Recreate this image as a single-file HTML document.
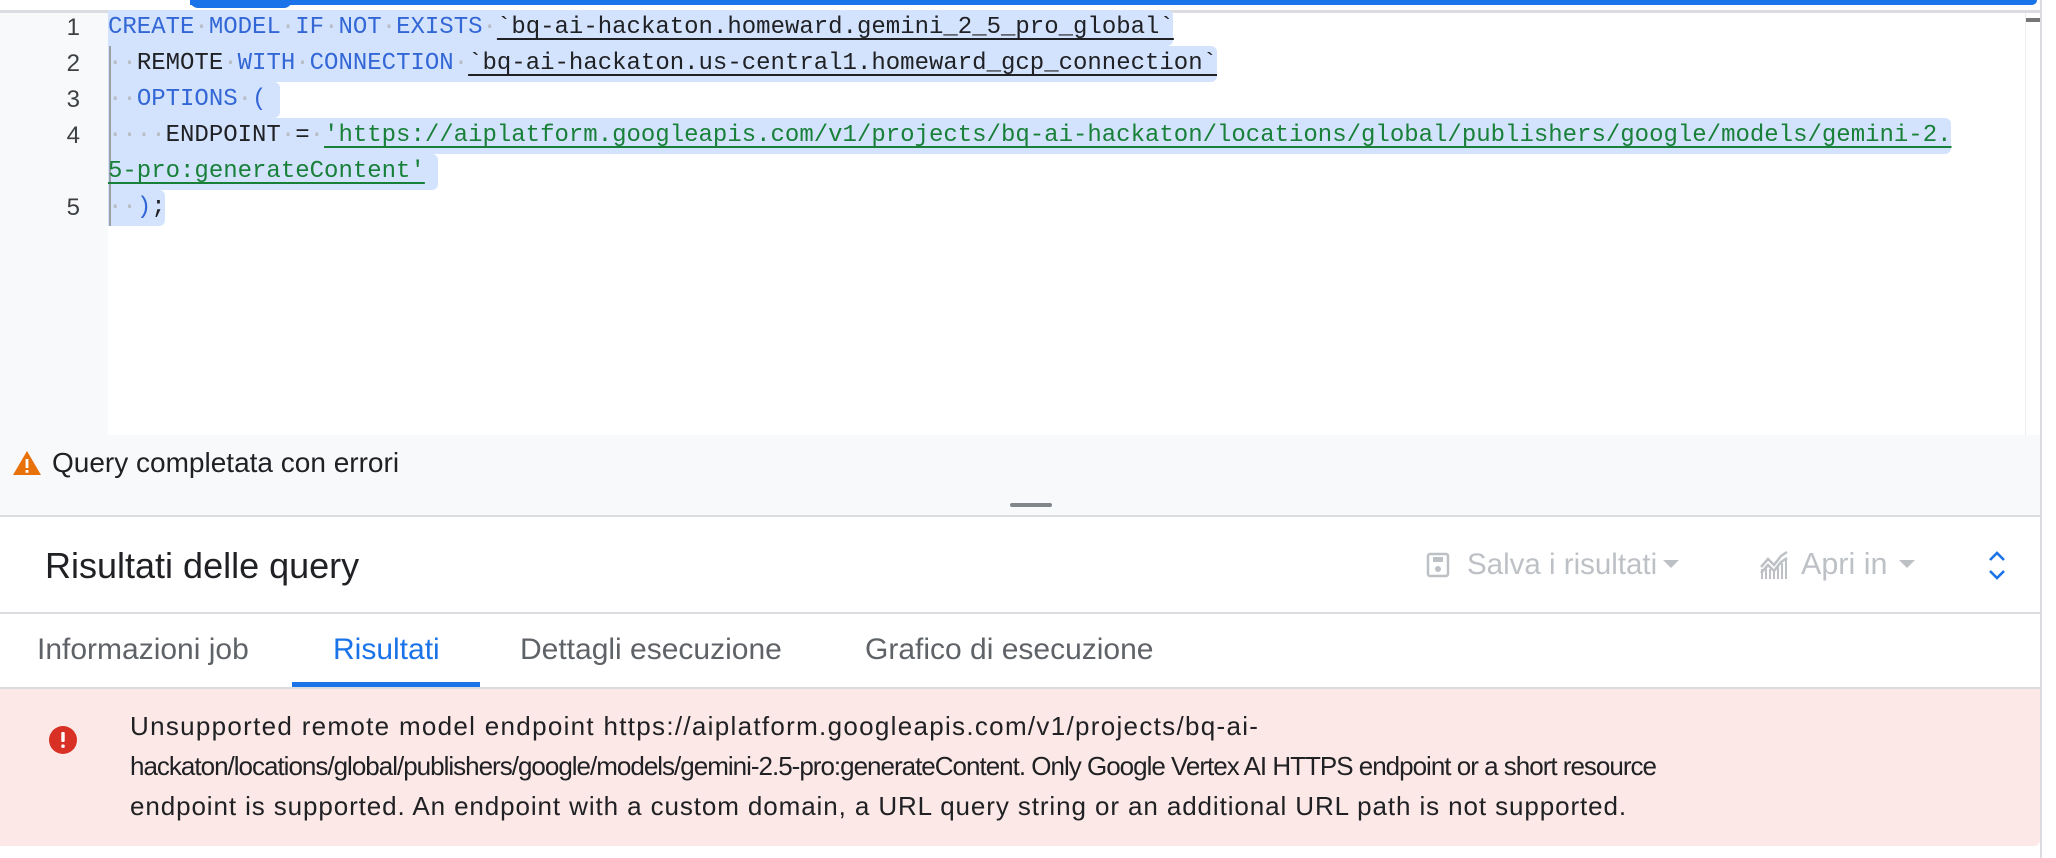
<!DOCTYPE html>
<html><head><meta charset="utf-8"><style>
*{margin:0;padding:0;box-sizing:border-box}
body{width:2056px;height:858px;background:#fff;position:relative;overflow:hidden;font-family:"Liberation Sans",Arial,sans-serif;color:#202124}
.abs{position:absolute}
.gut{left:0;top:13px;width:108px;height:422px;background:#f8f9fa}
.ln{position:absolute;left:0;width:80px;text-align:right;font-size:24px;color:#3c4043;line-height:36px}
.code{position:absolute;left:108px;font-family:"Liberation Mono",monospace;font-size:24px;line-height:36px;white-space:pre;color:#202124;height:36px}
.sel{position:absolute;background:#d3e3fd;height:36px;border-radius:0 6px 6px 0}
.k{color:#3367d6}
.s{text-decoration:underline;text-decoration-thickness:2px;text-underline-offset:5px}
.u{color:#188038;text-decoration:underline;text-decoration-thickness:2px;text-underline-offset:5px}
.d{color:#b8bcc4}
.tab{position:absolute;top:630px;font-size:30px;color:#5f6368;line-height:40px}
.err{position:absolute;left:130px;font-size:26px;line-height:40px;white-space:nowrap;color:#202124}
</style></head><body>
<div class="abs" style="left:0;top:10px;width:2040px;height:3px;background:#dadce0"></div>
<div class="abs" style="left:190px;top:0;width:1847px;height:5px;background:#1a73e8;border-radius:0 0 6px 0"></div>
<div class="abs" style="left:190px;top:0;width:102px;height:8px;background:#1a73e8;border-radius:0 0 8px 8px"></div>
<div class="abs gut"></div>
<div class="abs" style="left:2025px;top:13px;width:15px;height:422px;background:#fff;border-left:1px solid #eee"></div>
<div class="abs" style="left:2026px;top:18px;width:14px;height:4px;background:#777"></div>
<div class="abs" style="left:2040px;top:0;width:16px;height:858px;background:#fff;border-left:2px solid #dadce0"></div>

<div class="sel" style="left:108px;top:10px;width:1065px"></div>
<div class="sel" style="left:108px;top:46px;width:1109px"></div>
<div class="sel" style="left:108px;top:82px;width:172px"></div>
<div class="sel" style="left:108px;top:118px;width:1843px"></div>
<div class="sel" style="left:108px;top:154px;width:330px"></div>
<div class="sel" style="left:108px;top:190px;width:57px"></div>
<div class="abs" style="left:109px;top:46px;width:2px;height:180px;background:#9aa0a6"></div>

<div class="ln" style="top:10px">1</div>
<div class="ln" style="top:46px">2</div>
<div class="ln" style="top:82px">3</div>
<div class="ln" style="top:118px">4</div>
<div class="ln" style="top:190px">5</div>

<div class="code" style="top:10px"><span class="k">CREATE</span><span class="d">·</span><span class="k">MODEL</span><span class="d">·</span><span class="k">IF</span><span class="d">·</span><span class="k">NOT</span><span class="d">·</span><span class="k">EXISTS</span><span class="d">·</span><span class="s">`bq-ai-hackaton.homeward.gemini_2_5_pro_global`</span></div>
<div class="code" style="top:46px"><span class="d">··</span>REMOTE<span class="d">·</span><span class="k">WITH</span><span class="d">·</span><span class="k">CONNECTION</span><span class="d">·</span><span class="s">`bq-ai-hackaton.us-central1.homeward_gcp_connection`</span></div>
<div class="code" style="top:82px"><span class="d">··</span><span class="k">OPTIONS</span><span class="d">·</span><span class="k">(</span></div>
<div class="code" style="top:118px"><span class="d">····</span>ENDPOINT<span class="d">·</span>=<span class="d">·</span><span class="u">'https://aiplatform.googleapis.com/v1/projects/bq-ai-hackaton/locations/global/publishers/google/models/gemini-2.</span></div>
<div class="code" style="top:154px"><span class="u">5-pro:generateContent'</span></div>
<div class="code" style="top:190px"><span class="d">··</span><span class="k">)</span>;</div>

<div class="abs" style="left:0;top:435px;width:2040px;height:82px;background:#f8f9fa;border-bottom:2px solid #dadce0"></div>
<svg class="abs" style="left:12px;top:450px" width="30" height="26" viewBox="0 0 30 26"><path d="M15 1 L29 25 L1 25 Z" fill="#e8710a"/><rect x="13.6" y="9" width="2.8" height="9" fill="#fff"/><rect x="13.6" y="20" width="2.8" height="2.8" fill="#fff"/></svg>
<div class="abs" style="left:52px;top:446px;font-size:28px;line-height:34px">Query completata con errori</div>
<div class="abs" style="left:1010px;top:503px;width:42px;height:4px;border-radius:2px;background:#80868b"></div>

<div class="abs" style="left:45px;top:544px;font-size:36px;line-height:44px">Risultati delle query</div>
<svg class="abs" style="left:1426px;top:552px" width="24" height="26" viewBox="0 0 24 26"><rect x="2" y="2" width="20" height="22" rx="2" fill="none" stroke="#bdc1c6" stroke-width="2.5"/><rect x="7" y="5" width="10" height="5" fill="#bdc1c6"/><circle cx="12" cy="17" r="3" fill="#bdc1c6"/></svg>
<div class="abs" style="left:1467px;top:547px;font-size:29.5px;line-height:36px;color:#bdc1c6">Salva i risultati</div>
<svg class="abs" style="left:1662px;top:559px" width="18" height="10"><path d="M1 1 L17 1 L9 9 Z" fill="#bdc1c6"/></svg>
<svg class="abs" style="left:1759px;top:551px" width="30" height="28" viewBox="0 0 30 28"><path d="M2 16 L9 8 L15 14 L22 5 L28 1" fill="none" stroke="#bdc1c6" stroke-width="2.5"/><path d="M2 22 L9 14 L15 20 L22 11 L28 7" fill="none" stroke="#bdc1c6" stroke-width="2.5"/><g fill="#bdc1c6"><rect x="2" y="18" width="2" height="10"/><rect x="6" y="16" width="2" height="12"/><rect x="10" y="18" width="2" height="10"/><rect x="14" y="20" width="2" height="8"/><rect x="18" y="16" width="2" height="12"/><rect x="22" y="12" width="2" height="16"/><rect x="26" y="8" width="2" height="20"/></g></svg>
<div class="abs" style="left:1801px;top:546px;font-size:30.5px;line-height:36px;color:#bdc1c6">Apri in</div>
<svg class="abs" style="left:1898px;top:559px" width="18" height="10"><path d="M1 1 L17 1 L9 9 Z" fill="#bdc1c6"/></svg>
<svg class="abs" style="left:1987px;top:551px" width="20" height="30" viewBox="0 0 20 30"><path d="M3 9 L10 2 L17 9 M3 20 L10 27 L17 20" fill="none" stroke="#1a73e8" stroke-width="2.6"/></svg>
<div class="abs" style="left:0;top:612px;width:2040px;height:2px;background:#dadce0"></div>

<div class="tab" style="left:37px">Informazioni job</div>
<div class="tab" style="left:333px;color:#1a73e8">Risultati</div>
<div class="tab" style="left:520px">Dettagli esecuzione</div>
<div class="tab" style="left:865px">Grafico di esecuzione</div>
<div class="abs" style="left:292px;top:682px;width:188px;height:5px;background:#1a73e8"></div>
<div class="abs" style="left:0;top:687px;width:2040px;height:2px;background:#dadce0"></div>

<div class="abs" style="left:0;top:689px;width:2040px;height:157px;background:#fce8e6;border-radius:0 0 6px 0"></div>
<svg class="abs" style="left:49px;top:726px" width="28" height="28" viewBox="0 0 28 28"><circle cx="14" cy="14" r="14" fill="#d93025"/><rect x="12.3" y="6" width="3.4" height="10" rx="1" fill="#fff"/><rect x="12.3" y="18.5" width="3.4" height="3.4" rx="1" fill="#fff"/></svg>
<div class="err" style="top:706px;letter-spacing:1.3px">Unsupported remote model endpoint https://aiplatform.googleapis.com/v1/projects/bq-ai-</div>
<div class="err" style="top:746px;letter-spacing:-1px">hackaton/locations/global/publishers/google/models/gemini-2.5-pro:generateContent. Only Google Vertex AI HTTPS endpoint or a short resource</div>
<div class="err" style="top:786px;letter-spacing:0.9px">endpoint is supported. An endpoint with a custom domain, a URL query string or an additional URL path is not supported.</div>
</body></html>
